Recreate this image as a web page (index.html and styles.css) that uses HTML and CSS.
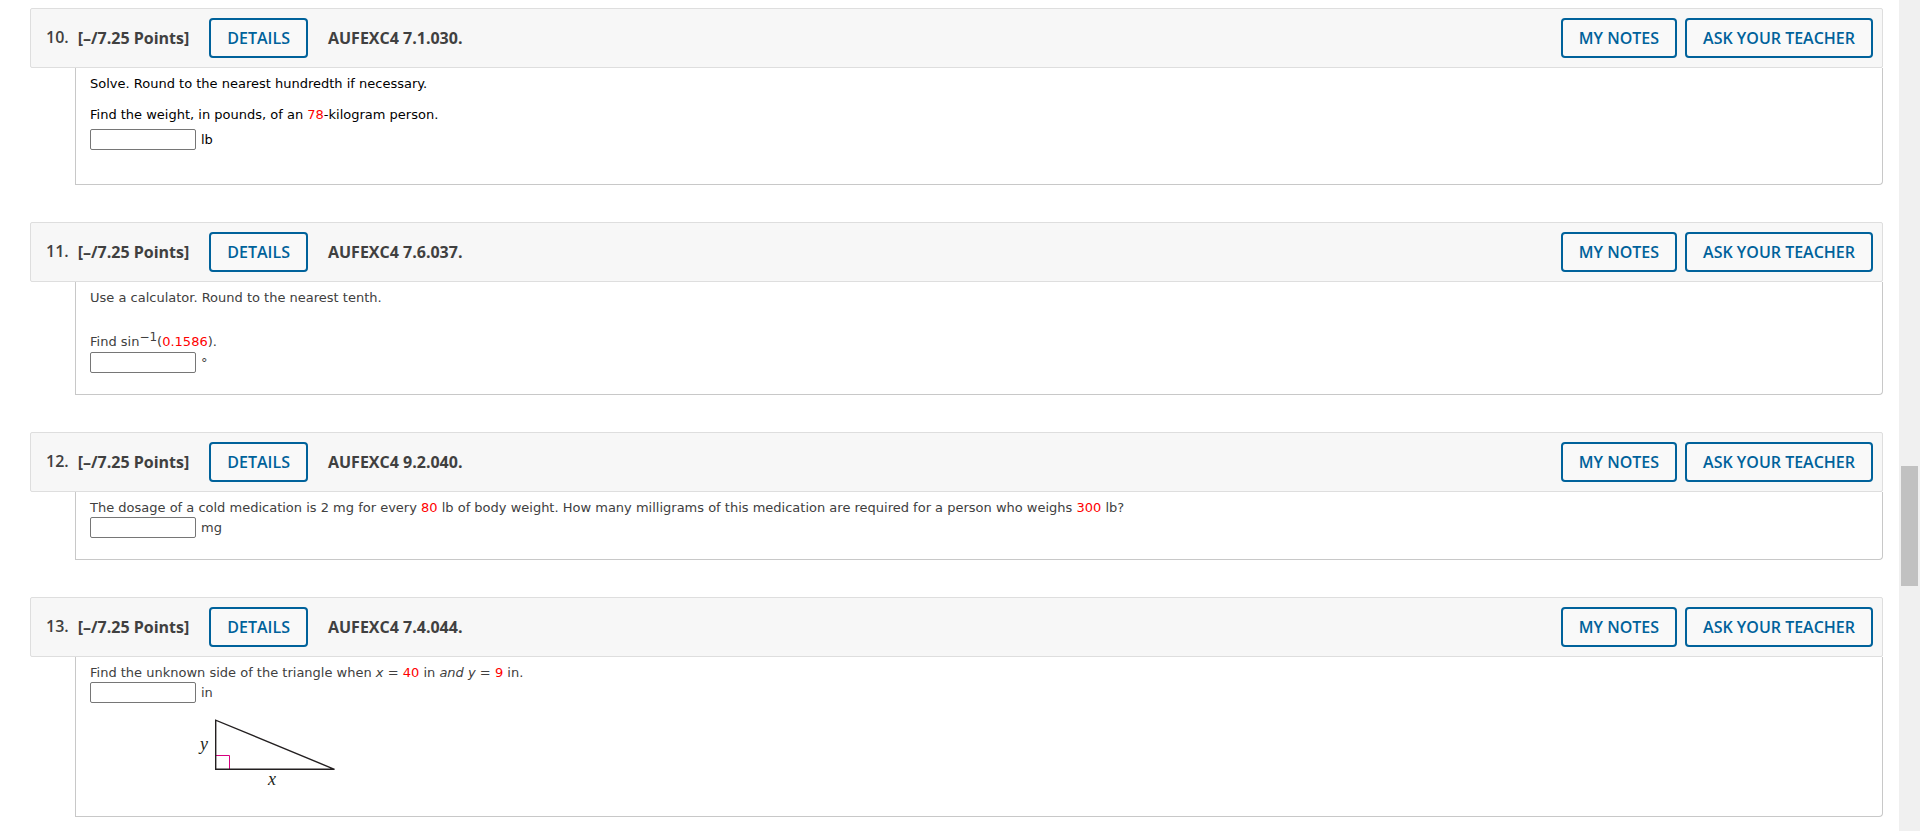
FILE: index.html
```html
<!DOCTYPE html>
<html lang="en">
<head>
  <meta charset="UTF-8" />
  <meta name="viewport" content="width=device-width, initial-scale=1.0"/>
  <title>Assignment Questions</title>
  <link rel="stylesheet" href="styles.css">
</head>
<body>

  <main class="questions">

    <section class="question">
      <div class="question-header">
        <span class="number">10.</span>
        <span class="points">[–/7.25 Points]</span>
        <button type="button" class="btn details">DETAILS</button>
        <span class="code">AUFEXC4 7.1.030.</span>
        <div class="actions">
          <button type="button" class="btn">MY NOTES</button>
          <button type="button" class="btn">ASK YOUR TEACHER</button>
        </div>
      </div>
      <div class="question-body dark roomy">
        <p>Solve. Round to the nearest hundredth if necessary.</p>
        <p class="spaced">Find the weight, in pounds, of an <span class="value">78</span>-kilogram person.</p>
        <div class="answer">
          <input type="text" id="answer10">
          <label for="answer10">lb</label>
        </div>
      </div>
    </section>

    <section class="question">
      <div class="question-header">
        <span class="number">11.</span>
        <span class="points">[–/7.25 Points]</span>
        <button type="button" class="btn details">DETAILS</button>
        <span class="code">AUFEXC4 7.6.037.</span>
        <div class="actions">
          <button type="button" class="btn">MY NOTES</button>
          <button type="button" class="btn">ASK YOUR TEACHER</button>
        </div>
      </div>
      <div class="question-body">
        <p>Use a calculator. Round to the nearest tenth.</p>
        <p class="formula">Find sin<sup>−1</sup>(<span class="value">0.1586</span>).</p>
        <div class="answer">
          <input type="text" id="answer11">
          <label for="answer11">°</label>
        </div>
      </div>
    </section>

    <section class="question">
      <div class="question-header">
        <span class="number">12.</span>
        <span class="points">[–/7.25 Points]</span>
        <button type="button" class="btn details">DETAILS</button>
        <span class="code">AUFEXC4 9.2.040.</span>
        <div class="actions">
          <button type="button" class="btn">MY NOTES</button>
          <button type="button" class="btn">ASK YOUR TEACHER</button>
        </div>
      </div>
      <div class="question-body">
        <p>The dosage of a cold medication is 2 mg for every <span class="value">80</span> lb of body weight. How many milligrams of this medication are required for a person who weighs <span class="value">300</span> lb?</p>
        <div class="answer">
          <input type="text" id="answer12">
          <label for="answer12">mg</label>
        </div>
      </div>
    </section>

    <section class="question">
      <div class="question-header">
        <span class="number">13.</span>
        <span class="points">[–/7.25 Points]</span>
        <button type="button" class="btn details">DETAILS</button>
        <span class="code">AUFEXC4 7.4.044.</span>
        <div class="actions">
          <button type="button" class="btn">MY NOTES</button>
          <button type="button" class="btn">ASK YOUR TEACHER</button>
        </div>
      </div>
      <div class="question-body">
        <p>Find the unknown side of the triangle when <i>x</i> = <span class="value">40</span> in <i>and</i> <i>y</i> = <span class="value">9</span> in.</p>
        <div class="answer">
          <input type="text" id="answer13">
          <label for="answer13">in</label>
        </div>
        <svg class="triangle" width="150" height="80" viewBox="0 0 150 80">
          <path d="M21 45.5H34.5V59" fill="none" stroke="#d6007f"/>
          <path d="M20.7 10.2V59.3H139.5Z" fill="none" stroke="#231f20" stroke-width="1.4"/>
          <text x="5" y="40">y</text>
          <text x="73" y="75">x</text>
        </svg>
      </div>
    </section>

  </main>

  <div class="scroll-track">
    <div class="scroll-thumb"></div>
  </div>

</body>
</html>
```

FILE: styles.css
```css
* { margin: 0; padding: 0; box-sizing: border-box; }

body {
  background: #fff;
  color: #404040;
  font-family: Verdana, "DejaVu Sans", sans-serif;
  font-size: 13px;
  line-height: 16px;
  display: flex;
  min-height: 100vh;
}

.questions {
  flex: 1;
  display: flex;
  flex-direction: column;
  gap: 37px;
  padding: 8px 16px 14px 30px;
}

.question-header {
  display: flex;
  align-items: center;
  height: 60px;
  padding: 0 9px 0 15px;
  background: #f7f7f7;
  border: 1px solid #dedede;
  border-radius: 2px;
  font-family: "Open Sans", sans-serif;
  font-size: 16px;
  line-height: 22px;
  font-weight: 700;
}

.number {
  margin-right: 9px;
  padding-bottom: 2px;
  font-weight: 600;
}

.btn {
  height: 40px;
  padding: 0 16px;
  background: #f9f9f9;
  border: 2px solid #00629b;
  border-radius: 4px;
  color: #00629b;
  font-family: "Open Sans", sans-serif;
  font-size: 16px;
  font-weight: 600;
  white-space: nowrap;
  cursor: pointer;
}

.btn:hover {
  background: #e6f0f6;
}

.details {
  margin: 0 20px;
}

.actions {
  display: flex;
  gap: 8px;
  margin-left: auto;
}

.question-body {
  margin-left: 45px;
  padding: 8px 14px 21px;
  border: 1px solid #c8c8c8;
  border-top: none;
  border-radius: 0 0 4px 0;
}

.dark {
  color: #000;
}

.roomy {
  padding-bottom: 34px;
}

.value {
  color: #f00;
}

.spaced {
  margin: 15px 0 5px;
}

.formula {
  margin: 28px 0 1px;
}

.formula sup {
  font-size: 12px;
  line-height: 0;
}

.answer {
  display: flex;
  align-items: center;
  gap: 5px;
  padding-top: 1px;
}

.answer input {
  width: 106px;
  height: 21px;
  padding: 1px 2px;
  border: 1px solid #767676;
  border-radius: 2px;
  font-family: inherit;
  font-size: 13px;
}

.triangle {
  display: block;
  margin: 7px 0 5px 105px;
}

.triangle text {
  font-family: "Liberation Serif", serif;
  font-size: 18px;
  font-style: italic;
  fill: #231f20;
}

.scroll-track {
  width: 21px;
  padding: 0 2px;
  background: #f0f0f0;
  display: grid;
  grid-template-rows: 466fr 120fr 245fr;
}

.scroll-thumb {
  grid-row: 2;
  background: #c1c1c1;
}
```
